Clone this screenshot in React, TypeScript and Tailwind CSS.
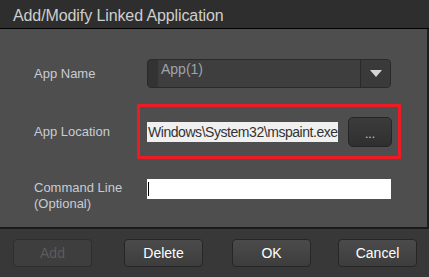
import React from 'react';

const font = { fontFamily: '"Liberation Sans", Arial, sans-serif' };

const FooterButton: React.FC<{ label: string; disabled?: boolean; className?: string }> = ({ label, disabled, className }) => (
  <button
    className={
      'h-[28px] w-[79px] rounded-[4px] border text-[14px] ' +
      (disabled
        ? 'border-[#2e2e2e] bg-[#3e3e3e] text-[#5c5c5c] '
        : 'border-[#262626] bg-gradient-to-b from-[#4b4b4b] to-[#3d3d3d] text-white ') +
      (className ?? '')
    }
  >
    {label}
  </button>
);

const App: React.FC = () => {
  return (
    <div className="w-[429px] h-[277px] flex flex-col bg-[#4e4e4e] overflow-hidden" style={font}>
      <div className="h-[29px] flex-none flex items-center pl-[13px] bg-[#2e2e2e] border-b border-black">
        <span className="text-[16px] text-[#cfcfcf] leading-none pt-[3px] tracking-[-0.1px]">Add/Modify Linked Application</span>
      </div>

      <div className="flex-1 flex flex-col pl-[34px] pt-[30px] border-r-2 border-[#1e1e1e]">
        {/* App Name */}
        <div className="flex items-center h-[29px]">
          <span className="w-[113px] text-[13px] text-[#c6ccd4]">App Name</span>
          <div className="w-[244px] h-[29px] flex rounded-[4px] border border-[#2a2a2a] bg-[#3e3e3e] overflow-hidden">
            <div className="w-[10px] bg-[#333333]" />
            <div className="flex-1 pl-[3px] pt-[1px] text-[14px] leading-[16px] text-[#9ea4ac]">App(1)</div>
            <div className="w-[30px] flex items-center justify-center border-l border-[#2a2a2a] bg-[#3a3a3a]">
              <svg width="12" height="7" viewBox="0 0 12 7">
                <polygon points="0,0 12,0 6,7" fill="#d6d6d6" />
              </svg>
            </div>
          </div>
        </div>

        {/* App Location */}
        <div className="flex items-center mt-[16px]">
          <span className="w-[103px] text-[13px] text-[#c6ccd4]">App Location</span>
          <div className="w-[264px] h-[55px] border-[3px] border-[#ed1c24] flex items-center pl-[7px]">
            <div className="w-[191px] h-[20px] bg-[#f0f0f0] overflow-hidden flex items-center pl-[1px]">
              <span className="whitespace-nowrap text-[14px] leading-none text-[#333333] tracking-[-0.45px]">Windows\System32\mspaint.exe</span>
            </div>
            <button className="ml-[10px] w-[44px] h-[30px] rounded-[5px] border border-[#252525] bg-gradient-to-b from-[#3c3c3c] to-[#2f2f2f] text-[12px] text-[#d8d0c0] leading-none pt-[4px]">
              ...
            </button>
          </div>
        </div>

        {/* Command Line */}
        <div className="flex items-start mt-[20px]">
          <div className="w-[113px] text-[13px] leading-[16px] text-[#c6ccd4] pt-[1px]">
            Command Line
            <br />
            (Optional)
          </div>
          <div className="w-[244px] h-[20px] bg-white flex items-center pl-[1px]">
            <div className="w-[1px] h-[14px] bg-black" />
          </div>
        </div>
      </div>

      <div className="h-[50px] flex-none flex items-center bg-[#383838] border-t-2 border-[#1a1a1a] pl-[13px]">
        <FooterButton label="Add" disabled />
        <FooterButton label="Delete" className="ml-[32px] w-[78px]" />
        <FooterButton label="OK" className="ml-[29px]" />
        <FooterButton label="Cancel" className="ml-[27px]" />
      </div>
    </div>
  );
};

export default App;
